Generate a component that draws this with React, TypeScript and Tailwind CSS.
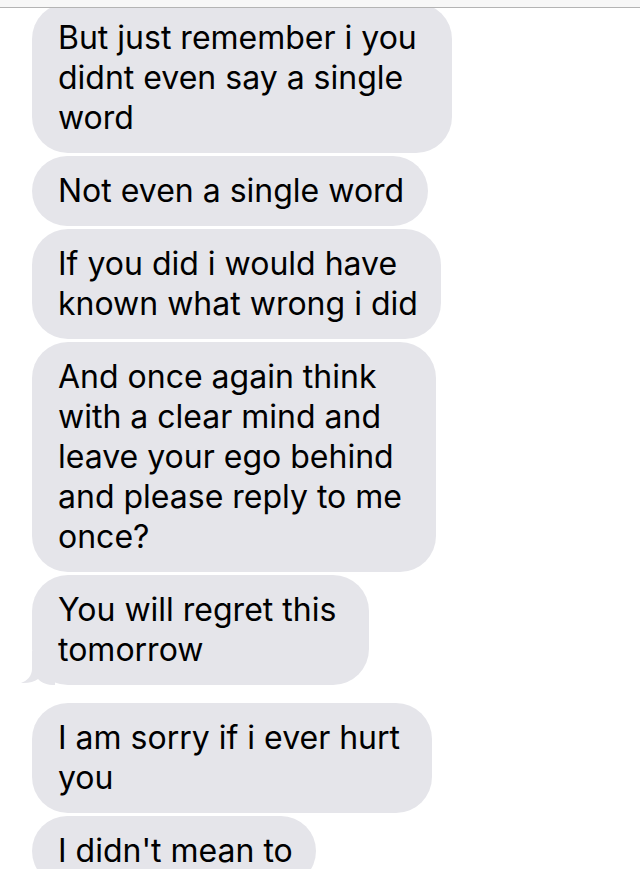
import React from "react";

const bubbles: { lines: string[]; w: number; tail?: boolean; mt?: string }[] = [
  { lines: ["But just remember i you", "didnt even say a single", "word"], w: 420 },
  { lines: ["Not even a single word"], w: 396 },
  { lines: ["If you did i would have", "known what wrong i did"], w: 409 },
  { lines: ["And once again think", "with a clear mind and", "leave your ego behind", "and please reply to me", "once?"], w: 404 },
  { lines: ["You will regret this", "tomorrow"], w: 337, tail: true },
  { lines: ["I am sorry if i ever hurt", "you"], w: 400, mt: "mt-[15px]" },
  { lines: ["I didn't mean to"], w: 284 },
];

export default function App() {
  return (
    <div className="relative h-[869px] w-[640px] overflow-hidden bg-white" style={{ fontFamily: "Inter, 'Liberation Sans', sans-serif" }}>
      <div className="absolute left-0 right-0 top-0 z-10 h-[8px] border-b border-[#b4b4b4] bg-[#f7f7f7]" />
      <div className="flex flex-col items-start gap-[3px] pl-[32px] pt-[3px]">
        {bubbles.map((b, i) => (
          <div
            key={i}
            className={`relative rounded-[36px] bg-[#e5e5ea] py-[15px] pl-[26px] text-[32px] leading-[40px] text-black whitespace-nowrap ${b.mt ?? ""}`}
            style={{ width: b.w }}
          >
            {b.lines.map((l, j) => (
              <div key={j}>{l}</div>
            ))}
            {b.tail && (
              <svg className="absolute bottom-0 left-[-11px]" width="34" height="34" viewBox="0 0 34 34">
                <path d="M11 0 L11 18 C11 25 6 30 0 32 C7 32.5 13 31 17 28 C21 32 26 34 34 34 L34 0 Z" fill="#e5e5ea" />
              </svg>
            )}
          </div>
        ))}
      </div>
    </div>
  );
}
